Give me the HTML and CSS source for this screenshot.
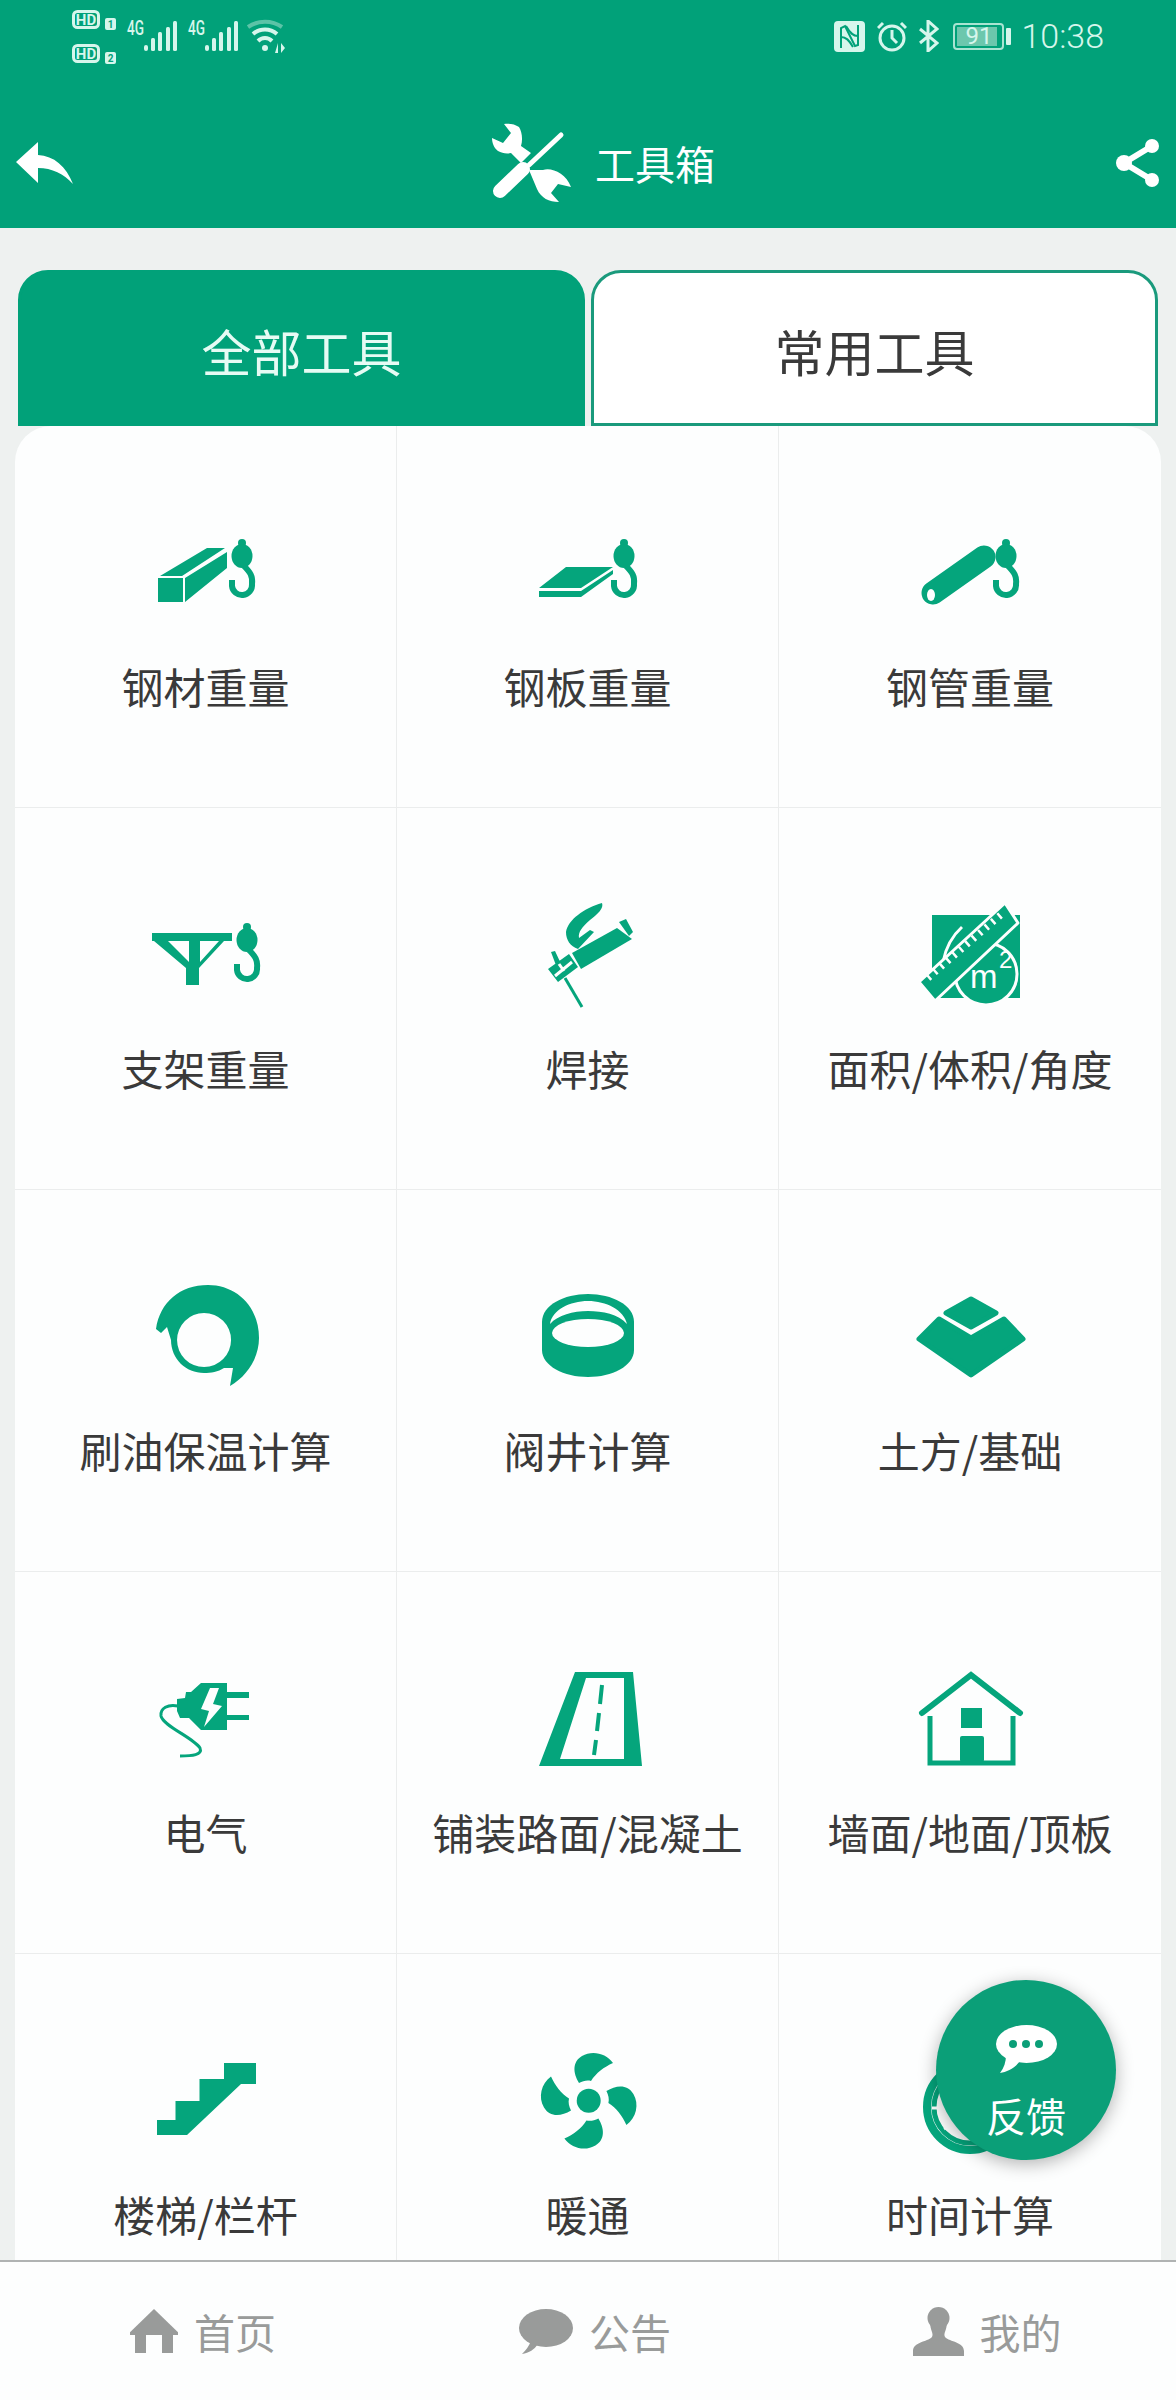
FILE: index.html
```html
<!DOCTYPE html>
<html lang="zh-CN">
<head>
    <meta charset="UTF-8">
    <title>工具箱</title>
    <link rel="stylesheet" href="styles.css">
</head>
<body>
<svg class="defs" width="0" height="0">
    <defs>
        <g id="hook">
            <circle cx="96" cy="31" r="4"/>
            <ellipse cx="96" cy="44" rx="10.500" ry="12"/>
            <path class="line" d="M98 54C104 60 107 64 106 72A10 10 0 0 1 86 74L86 68"/>
        </g>
        <path id="blade" d="M51 43C45 33 44 22 54 16C64 10 78 13 85 23C76 27 68 33 63 41C59 40 55 41 51 43Z"/>
    </defs>
</svg>

<div class="app">
    <!-- status bar + title -->
    <header class="top">
        <div class="status">
            <svg class="status-left" width="211" height="45" viewBox="0 0 211 45">
                <rect class="hd" x="1.5" y="1.5" width="25" height="16" rx="4"/>
                <text class="hd-text" x="14" y="15" text-anchor="middle">HD</text>
                <rect class="hd" x="1.5" y="35.5" width="25" height="16" rx="4"/>
                <text class="hd-text" x="14" y="49" text-anchor="middle">HD</text>
                <rect class="fill" x="33" y="8" width="11" height="12" rx="2"/>
                <text class="sim-text" x="38.500" y="18" text-anchor="middle">1</text>
                <rect class="fill" x="33" y="42" width="11" height="12" rx="2"/>
                <text class="sim-text" x="38.500" y="52" text-anchor="middle">2</text>
                <text class="net" x="55" y="25" textLength="17" lengthAdjust="spacingAndGlyphs">4G</text>
                <text class="net" x="116" y="25" textLength="17" lengthAdjust="spacingAndGlyphs">4G</text>
                <g class="fill">
                    <rect x="72" y="35" width="4" height="6" rx="2"/>
                    <rect x="79" y="28" width="4" height="13" rx="1.500"/>
                    <rect x="86" y="22" width="4" height="19" rx="1.500"/>
                    <rect x="94" y="17" width="4" height="24" rx="1.500"/>
                    <rect x="101" y="11" width="4" height="30" rx="1.500"/>
                    <rect x="133" y="35" width="4" height="6" rx="2"/>
                    <rect x="140" y="28" width="4" height="13" rx="1.500"/>
                    <rect x="147" y="22" width="4" height="19" rx="1.500"/>
                    <rect x="155" y="17" width="4" height="24" rx="1.500"/>
                    <rect x="162" y="11" width="4" height="30" rx="1.500"/>
                </g>
                <path class="wifi dim" d="M176 17C186 10 200 10 210 17"/>
                <path class="wifi" d="M181 24C188 18 198 18 205 24"/>
                <path class="wifi" d="M186 31C190 27 196 27 200 31"/>
                <circle class="fill" cx="193" cy="38" r="3"/>
                <path class="fill" d="M206 33V43H203L206 33ZM209 33V43L213 38Z"/>
            </svg>
            <div class="status-right">
                <svg width="31" height="31" viewBox="0 0 31 31">
                    <rect class="fill" width="31" height="31" rx="4"/>
                    <path class="nfc" d="M7 27V7L11 5L21 25L24 24V4"/>
                    <path class="nfc" d="M12 5C16 12 19 15 24 15M7 16C12 16 15 19 19 26"/>
                </svg>
                <svg width="30" height="31" viewBox="0 0 30 31">
                    <circle class="ring" cx="15" cy="17" r="12"/>
                    <path class="ring" d="M15 9V17L20 22M1 7L6 2M29 7L24 2"/>
                </svg>
                <svg width="20" height="32" viewBox="0 0 20 32">
                    <path class="ring" d="M1 9L18 23L9 31V1L18 9L1 23"/>
                </svg>
                <div class="battery"><span class="battery-level"></span><span class="battery-num">91</span></div>
                <span class="battery-nub"></span>
                <span class="time">10:38</span>
            </div>
        </div>
        <div class="toolbar">
            <svg class="back" width="57" height="42" viewBox="0 0 57 42">
                <path d="M0 20L22 0V13C38 14 50 24 57 42C48 32 36 26 22 26V41Z"/>
            </svg>
            <div class="title">
                <svg width="80" height="80" viewBox="0 0 80 80">
                    <path d="M1 15L12 20L20 10L13 1C18 0 24 1 28 4C31 9 32 16 30 23L40 30L30 40L20 30C15 31 11 30 7 28C3 25 1 20 1 15Z"/>
                    <path d="M38 47L52 47C60 44 75 50 80 64L67 61L60 70L68 79C58 79 50 75 46 66Z"/>
                    <path class="thin" d="M70 12L38 42"/>
                    <path class="grip" d="M32 46L9 68"/>
                </svg>
                <span>工具箱</span>
            </div>
            <svg class="share" width="44" height="48" viewBox="0 0 44 48">
                <path class="share-line" d="M36 7L8 24L36 41"/>
                <circle cx="36" cy="7" r="7"/>
                <circle cx="8" cy="24" r="8"/>
                <circle cx="36" cy="41" r="7"/>
            </svg>
        </div>
    </header>

    <main class="main">
        <div class="tabs">
            <div class="tab active">全部工具</div>
            <div class="tab">常用工具</div>
        </div>
        <div class="grid">
            <div class="cell">
                <svg class="icon" viewBox="0 0 120 120">
                    <path d="M12 66H37V90H12ZM14 64L61 36H79L36 64ZM39 66L81 40V56L39 90Z"/>
                    <use href="#hook"/>
                </svg>
                <span class="label">钢材重量</span>
            </div>
            <div class="cell">
                <svg class="icon" viewBox="0 0 120 120">
                    <path d="M38 55H85L53 76H11ZM11 79H53L85 58V62L53 85H11Z"/>
                    <use href="#hook"/>
                </svg>
                <span class="label">钢板重量</span>
            </div>
            <div class="cell">
                <svg class="icon" viewBox="0 0 120 120">
                    <path class="pipe" d="M23 81L74 45"/>
                    <ellipse class="cut" cx="21" cy="83" rx="4" ry="6"/>
                    <use href="#hook"/>
                </svg>
                <span class="label">钢管重量</span>
            </div>

            <div class="cell">
                <svg class="icon" viewBox="0 0 120 120">
                    <path d="M6 39H86V47H78L53 74V91H40V74L8 47H6ZM22 47L43 68V47ZM54 47V68L73 47Z" fill-rule="evenodd"/>
                    <use href="#hook" x="5" y="2"/>
                </svg>
                <span class="label">支架重量</span>
            </div>
            <div class="cell">
                <svg class="icon" viewBox="0 0 120 120">
                    <path d="M44 59L89 34L104 45L53 75Z"/>
                    <path d="M91 28L98 25L105 38L101 42Z"/>
                    <path d="M74 9C76 14 70 20 62 26C54 33 50 38 51 44L62 36L66 38L50 55C42 52 38 46 38 38C40 26 56 14 74 9Z"/>
                    <path d="M20 75L41 60L50 73L30 88ZM23 58L27 57L34 72L29 74Z"/>
                    <path class="rod" d="M37 84L54 113"/>
                    <path class="cut-line" d="M27 82L44 68M31 70L36 77"/>
                </svg>
                <span class="label">焊接</span>
            </div>
            <div class="cell">
                <svg class="icon" viewBox="0 0 120 120">
                    <rect x="22" y="21" width="88" height="83"/>
                    <path class="arc" d="M33 68C36 52 42 42 52 33"/>
                    <circle class="m-ring" cx="76" cy="80" r="31"/>
                    <path class="ruler" d="M95 9L108 29L25 107L9 88Z"/>
                    <path class="teeth" d="M18 84L93 19"/>
                    <text class="m2" x="60" y="94">m</text>
                    <text class="m2-sup" x="89" y="74">2</text>
                </svg>
                <span class="label">面积/体积/角度</span>
            </div>

            <div class="cell">
                <svg class="icon" viewBox="0 0 120 120">
                    <path d="M10 53C14 26 34 9 62 9C90 9 113 30 113 62C113 82 101 100 84 110L87 92L78 92C72 96 65 97 58 97C40 97 25 83 25 64L21 51L15 57ZM58 37A27 27 0 1 0 58.100 91A27 27 0 1 0 58 37Z" fill-rule="evenodd"/>
                </svg>
                <span class="label">刷油保温计算</span>
            </div>
            <div class="cell">
                <svg class="icon" viewBox="0 0 120 120">
                    <path d="M14 46C14 29 36 18 60 18C84 18 106 29 106 46V74C106 90 84 101 60 101C36 101 14 90 14 74Z"/>
                    <path class="cut" d="M22 48C24 34 42 25 60 25C78 25 96 34 99 48C90 38 75 35 60 35C45 35 30 39 22 48Z"/>
                    <ellipse class="cut" cx="60" cy="57" rx="36" ry="14"/>
                </svg>
                <span class="label">阀井计算</span>
            </div>
            <div class="cell">
                <svg class="icon" viewBox="0 0 120 120">
                    <path class="round" d="M61 23L86 37L61 51L36 37Z"/>
                    <path class="round" d="M29 43L61 62L94 43L113 63L61 99L9 63Z"/>
                </svg>
                <span class="label">土方/基础</span>
            </div>

            <div class="cell">
                <svg class="icon" viewBox="0 0 120 120">
                    <path d="M55 25H81V34H103V40H81V57H103V62H81V72H55L43 60L34 60L31 53V41L39 40L40 34L45 34Z"/>
                    <path class="cut" d="M64 30H73L67 46L76 48L58 69L63 53L55 51Z"/>
                    <path class="cord" d="M32 48C22 46 14 50 15 58C17 68 48 80 54 90C57 97 46 98 34 98"/>
                </svg>
                <span class="label">电气</span>
            </div>
            <div class="cell">
                <svg class="icon" viewBox="0 0 120 120">
                    <path d="M47 14H105L114 108H11ZM58 20L32 101H96V20Z" fill-rule="evenodd"/>
                    <path class="dash" d="M74 27L72 46M71 55L69 73M68 82L66 97"/>
                </svg>
                <span class="label">铺装路面/混凝土</span>
            </div>
            <div class="cell">
                <svg class="icon" viewBox="0 0 120 120">
                    <path class="roof" d="M12 55L61 17L110 55"/>
                    <path class="wall" d="M20 58V105H103V58"/>
                    <rect x="51" y="50" width="21" height="20"/>
                    <rect x="50" y="78" width="24" height="26" rx="2"/>
                </svg>
                <span class="label">墙面/地面/顶板</span>
            </div>

            <div class="cell">
                <svg class="icon" viewBox="0 0 120 120">
                    <path d="M11 80H29.500V61H53.500V39H78V23H110V44H95L41 95H11Z"/>
                </svg>
                <span class="label">楼梯/栏杆</span>
            </div>
            <div class="cell">
                <svg class="icon" viewBox="0 0 120 120">
                    <circle cx="60.700" cy="60.700" r="12"/>
                    <use href="#blade"/>
                    <use href="#blade" transform="rotate(90 60.700 60.700)"/>
                    <use href="#blade" transform="rotate(180 60.700 60.700)"/>
                    <use href="#blade" transform="rotate(270 60.700 60.700)"/>
                </svg>
                <span class="label">暖通</span>
            </div>
            <div class="cell">
                <svg class="icon" viewBox="0 0 120 120">
                    <circle class="clock" cx="60" cy="67" r="43"/>
                    <circle class="clock-inner" cx="60" cy="67" r="36"/>
                    <path class="tick" d="M22 68H29M34 89L40 85"/>
                </svg>
                <span class="label">时间计算</span>
            </div>
        </div>
    </main>

    <nav class="nav">
        <div class="nav-item">
            <svg width="48" height="44" viewBox="0 0 48 44">
                <path d="M24 0L48 40V45H0V40Z" transform="scale(1 .58)"/>
                <path d="M5 25H43V44H32V26H26H22H16V44H5Z"/>
            </svg>
            <span>首页</span>
        </div>
        <div class="nav-item">
            <svg width="54" height="45" viewBox="0 0 54 45">
                <ellipse cx="27" cy="19" rx="27" ry="19"/>
                <path d="M12 32L18 36C16 40 10 44 3 45C7 41 10 37 12 32Z"/>
            </svg>
            <span>公告</span>
        </div>
        <div class="nav-item">
            <svg width="51" height="49" viewBox="0 0 51 49">
                <ellipse cx="25.500" cy="11" rx="11" ry="11"/>
                <path d="M17 14C17 24 21 26 19 30C14 35 0 35 0 44V49H51V44C51 35 37 35 32 30C30 26 34 24 34 14Z"/>
            </svg>
            <span>我的</span>
        </div>
    </nav>

    <div class="fab">
        <svg width="61" height="48" viewBox="0 0 61 48">
            <ellipse cx="30.500" cy="19" rx="30.500" ry="19"/>
            <path d="M10 30L24 36C19 43 11 47 4 48C8 43 10 37 10 30Z"/>
            <circle class="dot" cx="17" cy="19" r="4"/>
            <circle class="dot" cx="30" cy="19" r="4"/>
            <circle class="dot" cx="43" cy="19" r="4"/>
        </svg>
        <span>反馈</span>
    </div>
</div>
</body>
</html>
```

FILE: styles.css
```css
/* --- Base --- */
* {
    margin: 0;
    padding: 0;
    box-sizing: border-box;
}

body {
    font-family: 'Noto Sans CJK SC', 'Noto Sans', sans-serif;
    background-color: #eef1f0;
    color: #3a3a3a;
}

.defs {
    position: absolute;
}

.app {
    position: relative;
    display: flex;
    flex-direction: column;
    width: 1176px;
    height: 2400px;
    overflow: hidden;
}

/* --- Top: status bar and toolbar --- */
.top {
    background-color: #01a179;
    height: 228px;
    flex: none;
}

.status {
    height: 75px;
    padding: 10px 72px 0;
    display: flex;
    justify-content: space-between;
    align-items: flex-start;
}

.status-left {
    overflow: visible;
}

.hd {
    fill: none;
    stroke: #d6f6ec;
    stroke-width: 3;
}

.hd-text {
    font: 700 15px 'Roboto', sans-serif;
    fill: #d6f6ec;
}

.sim-text {
    font: 700 10px 'Roboto', sans-serif;
    fill: #01a179;
}

.net {
    font: 500 20px 'Roboto', sans-serif;
    fill: #d6f6ec;
}

.fill {
    fill: #d6f6ec;
}

.wifi {
    fill: none;
    stroke: #d6f6ec;
    stroke-width: 4;
}

.wifi.dim {
    stroke: #5cc3a7;
}

.status-right {
    display: flex;
    align-items: center;
    gap: 12px;
    margin-top: 6px;
}

.nfc {
    fill: none;
    stroke: #01a179;
    stroke-width: 2;
}

.ring {
    fill: none;
    stroke: #d6f6ec;
    stroke-width: 3;
}

.battery {
    position: relative;
    width: 51px;
    height: 27px;
    margin-left: 2px;
    border: 2px solid #a9e4d2;
    border-radius: 4px;
    text-align: center;
    color: #d6f6ec;
    font: 400 24px/23px 'Roboto', sans-serif;
}

.battery-level {
    position: absolute;
    top: 2px;
    left: 2px;
    bottom: 2px;
    width: 40px;
    background-color: #6cc7ad;
}

.battery-num {
    position: relative;
}

.battery-nub {
    width: 5px;
    height: 17px;
    margin-left: -10px;
    border-radius: 1px;
    background-color: #d6f6ec;
}

.time {
    font: 300 34px 'Roboto', sans-serif;
    color: #d6f6ec;
    margin-left: -2px;
}

.toolbar {
    display: grid;
    grid-template-columns: 1fr auto 1fr;
    align-items: center;
    padding: 23px 16px 0;
    height: 153px;
}

.toolbar svg {
    fill: #fff;
}

.share {
    justify-self: end;
}

.share-line {
    fill: none;
    stroke: #fff;
    stroke-width: 6;
}

.title {
    display: flex;
    align-items: center;
    gap: 24px;
    padding-left: 30px;
    color: #fff;
    font-size: 40px;
}

.thin {
    fill: none;
    stroke: #fff;
    stroke-width: 5;
    stroke-linecap: round;
}

.grip {
    fill: none;
    stroke: #fff;
    stroke-width: 14;
    stroke-linecap: round;
}

/* --- Tabs and tool grid --- */
.main {
    flex: 1;
    min-height: 0;
    overflow: hidden;
    padding: 42px 15px 0;
}

.tabs {
    display: flex;
    gap: 6px;
    margin: 0 3px;
}

.tab {
    flex: 1;
    height: 156px;
    border: 3px solid #1a9a7c;
    border-radius: 30px 30px 0 0;
    background-color: #fff;
    font-size: 50px;
    line-height: 154px;
    text-align: center;
}

.tab.active {
    border-color: #01a179;
    background-color: #01a179;
    color: #e6fbf4;
}

.grid {
    display: grid;
    grid-template-columns: repeat(3, 1fr);
    grid-auto-rows: 382px;
    background-color: #fdfefe;
    border-radius: 36px 36px 0 0;
}

.cell {
    display: flex;
    flex-direction: column;
    align-items: center;
    padding-top: 86px;
    border-right: 1px solid #ebeded;
    border-bottom: 1px solid #ebeded;
}

.cell:nth-child(3n) {
    border-right: none;
}

.icon {
    width: 120px;
    height: 120px;
    flex: none;
    fill: #05a57c;
    overflow: visible;
}

.label {
    margin-top: 29px;
    font-size: 42px;
    line-height: 50px;
    white-space: nowrap;
}

/* icon details */
.line {
    fill: none;
    stroke: #05a57c;
    stroke-width: 6;
}

.pipe {
    fill: none;
    stroke: #05a57c;
    stroke-width: 23;
    stroke-linecap: round;
}

.cut {
    fill: #fdfefe;
}

.cut-line {
    fill: none;
    stroke: #fdfefe;
    stroke-width: 3;
}

.rod {
    fill: none;
    stroke: #05a57c;
    stroke-width: 3;
}

.arc {
    fill: none;
    stroke: #fdfefe;
    stroke-width: 3;
}

.m-ring {
    fill: #05a57c;
    stroke: #fdfefe;
    stroke-width: 3;
}

.ruler {
    fill: #05a57c;
    stroke: #fdfefe;
    stroke-width: 3;
    stroke-linejoin: round;
}

.teeth {
    fill: none;
    stroke: #fdfefe;
    stroke-width: 7;
    stroke-dasharray: 2.5 6;
}

.m2 {
    font: 400 33px 'Liberation Sans', sans-serif;
    fill: #fdfefe;
}

.m2-sup {
    font: 400 24px 'Liberation Sans', sans-serif;
    fill: #fdfefe;
}

.round {
    stroke: #05a57c;
    stroke-width: 5;
    stroke-linejoin: round;
}

.cord {
    fill: none;
    stroke: #05a57c;
    stroke-width: 3;
}

.dash {
    fill: none;
    stroke: #05a57c;
    stroke-width: 4;
}

.roof {
    fill: none;
    stroke: #05a57c;
    stroke-width: 6;
    stroke-linecap: round;
}

.wall {
    fill: none;
    stroke: #05a57c;
    stroke-width: 5;
}

.clock {
    fill: none;
    stroke: #05a57c;
    stroke-width: 8;
}

.clock-inner {
    fill: none;
    stroke: #05a57c;
    stroke-width: 5;
}

.tick {
    fill: none;
    stroke: #fdfefe;
    stroke-width: 3;
}

/* --- Bottom nav --- */
.nav {
    display: flex;
    flex: none;
    height: 140px;
    border-top: 2px solid #b0b3b3;
    background-color: #fdfefe;
}

.nav-item {
    flex: 1;
    display: flex;
    align-items: center;
    justify-content: center;
    gap: 16px;
    padding-left: 14px;
    color: #999b9a;
    font-size: 41px;
}

.nav-item svg {
    fill: #999b9a;
}

/* --- Feedback button --- */
.fab {
    position: absolute;
    right: 60px;
    bottom: 240px;
    width: 180px;
    height: 180px;
    padding-top: 45px;
    border-radius: 50%;
    background-color: #0b9f78;
    box-shadow: 0 4px 18px rgba(0, 0, 0, 0.3);
    display: flex;
    flex-direction: column;
    align-items: center;
    color: #fff;
    font-size: 40px;
    line-height: 48px;
}

.fab svg {
    fill: #fff;
    margin-bottom: 18px;
}

.dot {
    fill: #0b9f78;
}
```
